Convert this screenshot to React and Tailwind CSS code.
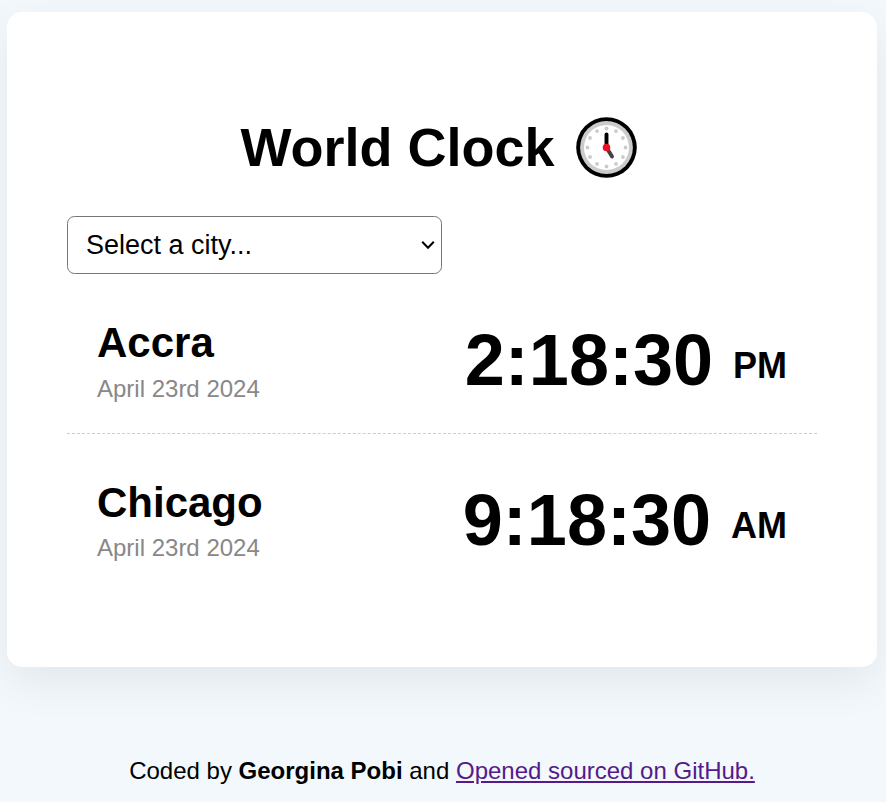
const cities = [
  { name: "Accra", date: "April 23rd 2024", time: "2:18:30", period: "PM" },
  { name: "Chicago", date: "April 23rd 2024", time: "9:18:30", period: "AM" },
];

const hourDots = Array.from({ length: 12 }, (_, i) => {
  const angle = (i * Math.PI) / 6;
  return { x: 30.5 + 19 * Math.sin(angle), y: 30.5 - 19 * Math.cos(angle) };
});

function ClockIcon() {
  return (
    <svg width="61" height="61" viewBox="0 0 61 61" aria-hidden="true">
      <circle cx="30.5" cy="30.5" r="30.3" fill="#000" />
      <circle cx="30.5" cy="30.5" r="26.4" fill="#cbcbcb" />
      <circle cx="30.5" cy="30.5" r="22.5" fill="#fff" />
      {hourDots.map((dot, i) => (
        <circle key={i} cx={dot.x} cy={dot.y} r="1.9" fill="#cbcbcb" />
      ))}
      <path d="M30.5 30.5L36 39.5" stroke="#434343" strokeWidth="3.9" strokeLinecap="round" />
      <path d="M30.5 30.5V17.4" stroke="#000" strokeWidth="3.9" strokeLinecap="round" />
      <circle cx="30.5" cy="30.5" r="3.8" fill="#e81224" />
    </svg>
  );
}

function CityRow({ name, date, time, period }) {
  return (
    <div className="flex h-[159.7px] items-start justify-between border-b border-dashed border-[#ccc] px-[30px] pt-[44.9px] last:border-0">
      <div>
        <h2 className="text-[42px] leading-[48px] font-bold">{name}</h2>
        <div className="mt-[7.7px] text-[24px] leading-[27px] text-[#888]">{date}</div>
      </div>
      <div className="text-[72px] leading-[83px] font-bold whitespace-nowrap">
        {time} <small className="inline-block align-[7px] text-[36px] leading-none">{period}</small>
      </div>
    </div>
  );
}

export default function App() {
  return (
    <div className="h-[802px] overflow-hidden bg-[#f2f8fb] pt-[12px] font-['Liberation_Sans',Arial,sans-serif] text-black">
      <main className="ml-[7px] h-[655px] w-[870px] rounded-[15px] bg-white px-[60px] pt-[104px] shadow-[0_15px_45px_rgba(0,0,0,0.07)]">
        <h1 className="flex h-[62px] items-center justify-center gap-[21px] pr-[7px] text-[54px] leading-[62px] font-bold">
          <span>World Clock</span>
          <ClockIcon />
        </h1>
        <button className="mt-[38px] flex h-[58px] w-[375px] items-center justify-between rounded-[7.5px] border border-[#767676] bg-white pr-[6px] pl-[18px] text-[27px]">
          <span>Select a city...</span>
          <svg width="14" height="10" viewBox="0 0 14 10" fill="none" aria-hidden="true">
            <path d="M1.2 1.8L7 7.7L12.8 1.8" stroke="#000" strokeWidth="2" />
          </svg>
        </button>
        <section>
          {cities.map((city) => (
            <CityRow key={city.name} {...city} />
          ))}
        </section>
      </main>
      <footer className="mt-[90px] pr-[2px] text-center text-[24px] leading-[28px]">
        Coded by <strong>Georgina Pobi</strong> and{" "}
        <a href="#" className="text-[#551a8b] underline">Opened sourced on GitHub.</a>
      </footer>
    </div>
  );
}
